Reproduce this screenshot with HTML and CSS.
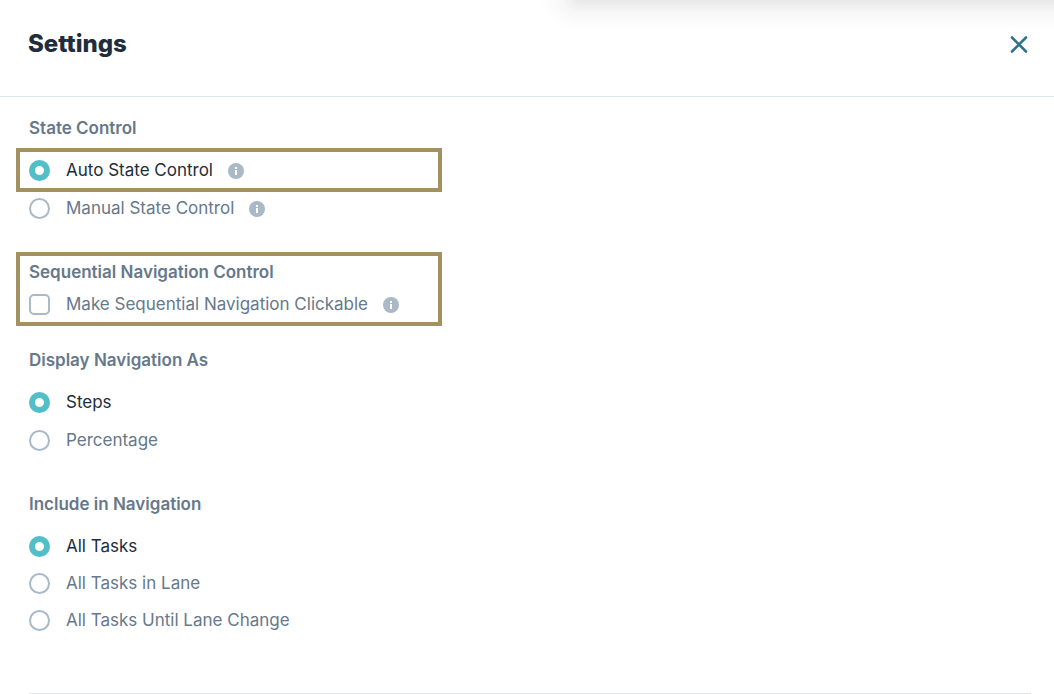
FILE: index.html
```html
<!DOCTYPE html>
<html lang="en">
<head>
<meta charset="utf-8">
<meta name="viewport" content="width=device-width, initial-scale=1">
<title>Settings</title>
<link rel="stylesheet" href="styles.css">
</head>
<body>
<svg class="defs" aria-hidden="true">
  <symbol id="info" viewBox="0 0 16 16">
    <circle cx="8" cy="8" r="8" fill="#a9b9c8"/>
    <path d="M7 4h2v2H7zM7 7h2v5H7z" fill="#fff"/>
  </symbol>
</svg>
<header class="header">
  <h1 class="title">Settings</h1>
  <button class="close" type="button" aria-label="Close">
    <svg width="18" height="18" viewBox="0 0 18 18"><path d="M2 2.500l14 14M16 2.500l-14 14" fill="none" stroke="#2f7289" stroke-width="2.600" stroke-linecap="round"/></svg>
  </button>
</header>
<main class="content">
  <fieldset class="group">
    <legend class="heading">State Control</legend>
    <div class="frame frame-row">
      <div class="option">
        <input class="control radio" type="radio" name="state" id="auto" checked>
        <label class="label" for="auto">Auto State Control</label>
        <svg class="info"><use href="#info"/></svg>
      </div>
    </div>
    <div class="option inset">
      <input class="control radio" type="radio" name="state" id="manual">
      <label class="label" for="manual">Manual State Control</label>
      <svg class="info"><use href="#info"/></svg>
    </div>
  </fieldset>
  <fieldset class="group frame frame-group">
    <div class="heading">Sequential Navigation Control</div>
    <div class="option">
      <input class="control checkbox" type="checkbox" id="clickable">
      <label class="label" for="clickable">Make Sequential Navigation Clickable</label>
      <svg class="info"><use href="#info"/></svg>
    </div>
  </fieldset>
  <fieldset class="group inset">
    <legend class="heading">Display Navigation As</legend>
    <div class="options">
      <div class="option">
        <input class="control radio" type="radio" name="display" id="steps" checked>
        <label class="label" for="steps">Steps</label>
      </div>
      <div class="option">
        <input class="control radio" type="radio" name="display" id="percentage">
        <label class="label" for="percentage">Percentage</label>
      </div>
    </div>
  </fieldset>
  <fieldset class="group group-include inset">
    <legend class="heading">Include in Navigation</legend>
    <div class="options">
      <div class="option">
        <input class="control radio" type="radio" name="include" id="all" checked>
        <label class="label" for="all">All Tasks</label>
      </div>
      <div class="option">
        <input class="control radio" type="radio" name="include" id="lane">
        <label class="label" for="lane">All Tasks in Lane</label>
      </div>
      <div class="option">
        <input class="control radio" type="radio" name="include" id="change">
        <label class="label" for="change">All Tasks Until Lane Change</label>
      </div>
    </div>
  </fieldset>
  <hr class="divider">
</main>
</body>
</html>
```
FILE: styles.css
```css
* { box-sizing: border-box; }
body {
  margin: 0;
  background: #fff;
  color: #66788a;
  font: 17px/24px Inter, "Liberation Sans", sans-serif;
}
.defs { position: absolute; width: 0; height: 0; }
.header {
  position: relative;
  display: flex;
  align-items: center;
  justify-content: space-between;
  padding: 28px 23px 36px 28px;
  border-bottom: 1px solid #e1e7f0;
}
/* Shadow cast by the bar above the panel */
.header::before {
  content: "";
  position: absolute;
  top: 0;
  left: 540px;
  right: 0;
  height: 32px;
  background: radial-gradient(ellipse 40px 30px at 40px 0, rgba(0, 0, 0, 0.09), rgba(0, 0, 0, 0.03) 42%, transparent) 0 0 / 40px 100% no-repeat,
    linear-gradient(rgba(0, 0, 0, 0.09), rgba(0, 0, 0, 0.03) 40%, transparent 94%) 40px 0 no-repeat;
  pointer-events: none;
}
.title { margin: 0; color: #212d3b; font-size: 24px; line-height: 32px; font-weight: 800; }
.close {
  display: flex;
  align-items: center;
  justify-content: center;
  width: 24px;
  height: 32px;
  padding: 0;
  border: 0;
  background: none;
  cursor: pointer;
}
.content { padding: 19px 16px 0; }
.group { min-width: 0; margin: 0 0 28px; padding: 0; border: 0; }
.heading { padding: 0; font-weight: 600; }
.group > legend.heading { margin-left: 13px; }
.group.inset > legend.heading { margin-left: 0; }
.inset { padding-left: 13px; }
.frame { max-width: 426px; border: 4px solid #a39161; }
.frame-row { margin-top: 8px; padding: 2px 9px; }
.frame-group { margin-bottom: 22px; padding: 4px 9px 2px; }
.frame-group .option { margin-top: 4px; }
.options { display: grid; gap: 6px; padding-top: 14px; }
.group-include { margin: 36px 0 57px; }
.group-include .options { gap: 5px; }
.option { display: flex; align-items: center; min-height: 32px; }
.control {
  appearance: none;
  flex: none;
  width: 21px;
  height: 21px;
  margin: 0 16px 0 0;
  border: 2px solid #a9b9c8;
  background: #fff;
}
.radio { border-radius: 50%; }
.radio:checked { border: 6px solid #52bec7; }
.checkbox { border-radius: 5px; }
.radio:checked + .label { color: #212d3b; }
.info { flex: none; width: 16px; height: 16px; margin: 1px 0 0 15px; }
.divider { height: 1px; margin: 0 7px 0 13px; border: 0; background: #e4e6e9; }
```
